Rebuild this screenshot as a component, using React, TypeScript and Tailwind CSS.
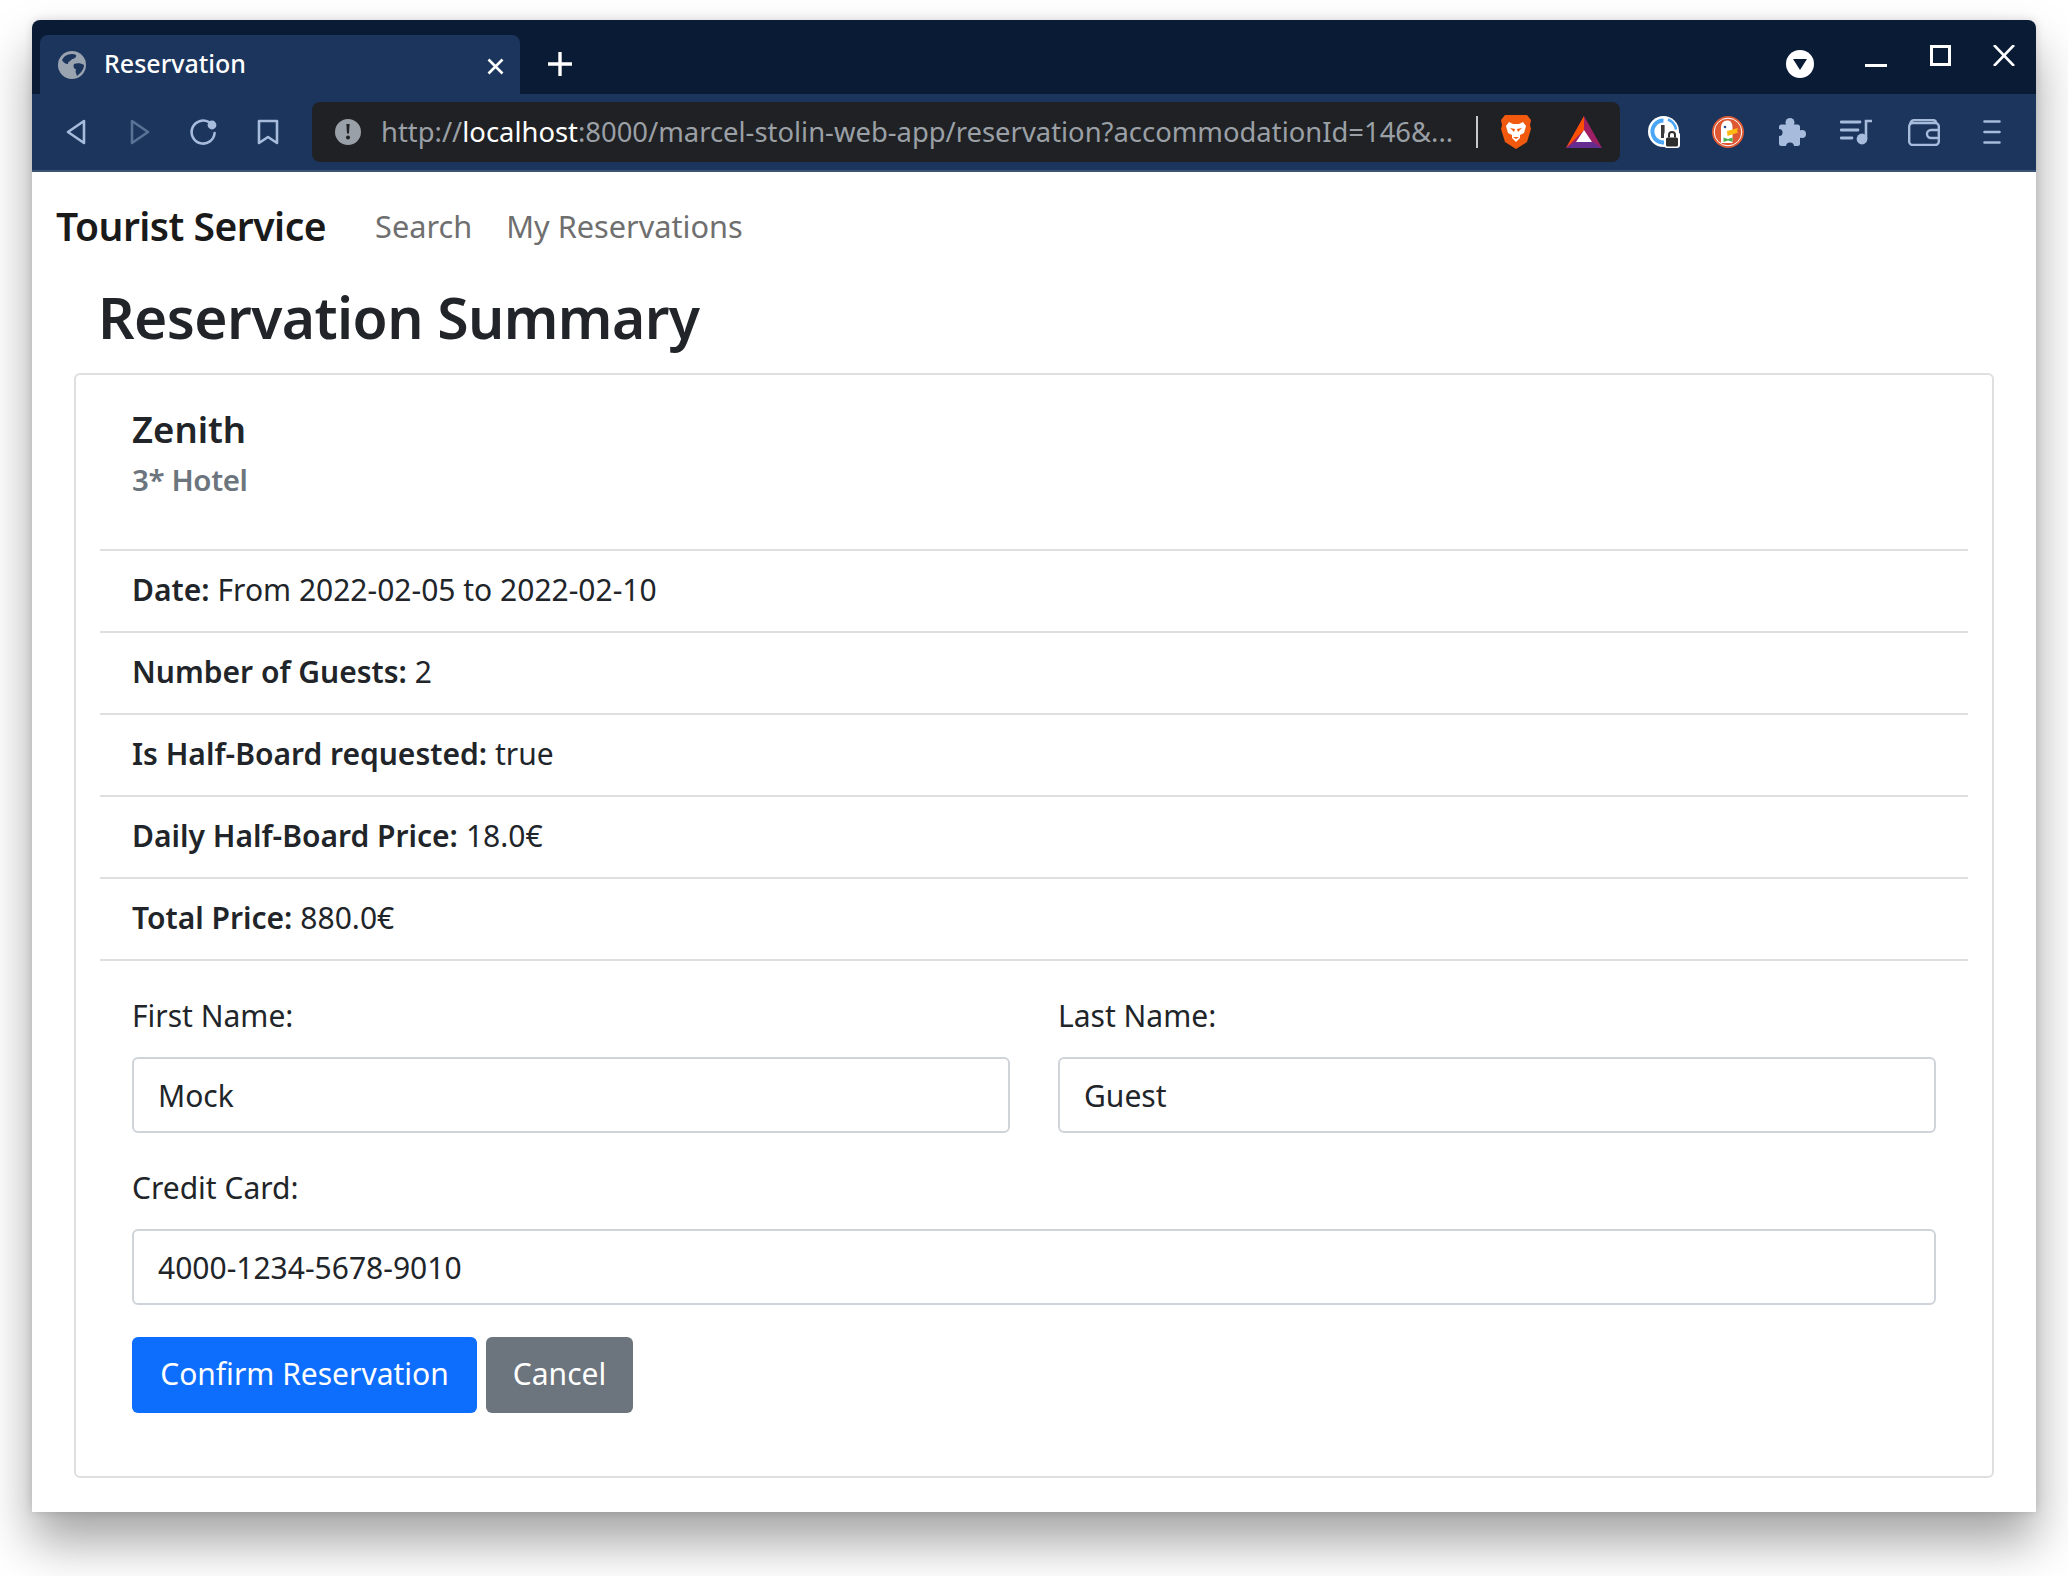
const details = [
  { label: 'Date:', value: 'From 2022-02-05 to 2022-02-10' },
  { label: 'Number of Guests:', value: '2' },
  { label: 'Is Half-Board requested:', value: 'true' },
  { label: 'Daily Half-Board Price:', value: '18.0€' },
  { label: 'Total Price:', value: '880.0€' },
]

function Field({ label, value, className }: { label: string; value: string; className?: string }) {
  return (
    <div className={className}>
      <label className="block h-[33px] leading-[33px] mb-[25px]">{label}</label>
      <input
        readOnly
        value={value}
        className="block w-full h-[76px] px-[24px] border-2 border-[#ced4da] rounded-[6px] bg-white text-[#212529] outline-none"
      />
    </div>
  )
}

function TabStrip() {
  return (
    <div className="h-[74px] shrink-0 bg-[#0a1b35] flex items-end pl-[8px] text-white">
      <div className="w-[480px] h-[60px] bg-[#1b355c] rounded-t-[8px] flex items-center pl-[18px] pr-[16px] -mb-px">
        <svg width="28" height="28" viewBox="0 0 28 28">
          <circle cx="14" cy="14" r="14" fill="#9aa3b0" />
          <path d="M6 6c3-3 9-4 12-2 1 2-2 4-4 4-1 2-4 2-4 5-3 0-5-2-6-4zM16 13c3-1 7-1 10 1 0 4-3 8-7 11-1-3-2-4-1-7-2 0-3-2-2-5z" fill="#1b355c" />
        </svg>
        <span className="ml-[18px] mb-[4px] text-[25px] font-medium leading-[32px] flex-1">Reservation</span>
        <svg width="17" height="17" viewBox="0 0 17 17" className="mt-[2px]">
          <path d="M1.5 1.5l14 14M15.5 1.5l-14 14" stroke="#fff" strokeWidth="2.6" />
        </svg>
      </div>
      <svg width="24" height="24" viewBox="0 0 24 24" className="ml-[28px] mb-[18px]">
        <path d="M12 0v24M0 12h24" stroke="#fff" strokeWidth="3.4" strokeLinecap="round" />
      </svg>
      <div className="ml-auto self-start flex items-start pt-[25px] pr-[21px]">
        <div className="w-[28px] h-[28px] mt-[5px] rounded-full bg-white flex items-center justify-center">
          <svg width="14" height="11" viewBox="0 0 14 11">
            <path d="M0 0h14l-7 11z" fill="#0a1b35" />
          </svg>
        </div>
        <div className="w-[22px] h-[3px] bg-white ml-[51px] mt-[19px]" />
        <div className="w-[21px] h-[21px] border-[3px] border-white ml-[43px]" />
        <svg width="22" height="21" viewBox="0 0 22 21" className="ml-[42px]">
          <path d="M1 0l20 21M21 0L1 21" stroke="#fff" strokeWidth="2.6" />
        </svg>
      </div>
    </div>
  )
}

function Toolbar() {
  return (
    <div className="h-[78px] shrink-0 bg-[#1b355c] border-b-2 border-[#3b5375] flex items-center">
      <svg width="20" height="26" viewBox="0 0 20 26" fill="none" stroke="#a7bbdc" strokeWidth="2.6" strokeLinejoin="round" className="ml-[34px]">
        <path d="M18 2v22L2 13z" />
      </svg>
      <svg width="20" height="26" viewBox="0 0 20 26" fill="none" stroke="#587296" strokeWidth="2.6" strokeLinejoin="round" className="ml-[44px]">
        <path d="M2 2v22l16-11z" />
      </svg>
      <svg width="27" height="26" viewBox="0 0 27 26" fill="none" className="ml-[40px]">
        <path d="M19 3.2A11.5 11.5 0 1 0 24.6 14" stroke="#a7bbdc" strokeWidth="2.6" strokeLinecap="round" />
        <circle cx="22" cy="6" r="4.4" fill="#a7bbdc" />
      </svg>
      <svg width="22" height="26" viewBox="0 0 22 26" fill="none" stroke="#a7bbdc" strokeWidth="2.6" strokeLinejoin="round" className="ml-[40px]">
        <path d="M2 2h18v22l-9-6-9 6z" />
      </svg>
      <div className="w-[1308px] h-[60px] ml-[33px] bg-[#202124] rounded-[8px] flex items-center relative">
        <div className="w-[26px] h-[26px] rounded-full bg-[#9aa0a8] ml-[23px] flex items-center justify-center">
          <svg width="6" height="18" viewBox="0 0 6 18">
            <path d="M1.4 1h3.2l-.6 9.6H2z" fill="#202124" />
            <circle cx="3" cy="14.6" r="2" fill="#202124" />
          </svg>
        </div>
        <span className="ml-[20px] w-[1085px] shrink-0 text-[27.4px] leading-[40px] text-[#9aa0a6] whitespace-nowrap">
          http://<span className="text-white">localhost</span>:8000/marcel-stolin-web-app/reservation?accommodationId=146&...
        </span>
        <div className="w-[2px] h-[32px] bg-[#c7c9cc] ml-[10px]" />
        <svg width="32" height="36" viewBox="0 0 32 36" className="ml-[22px]">
          <path d="M5 1h22l4 5-1 5 1 4-4 13-11 7-11-7L1 15l1-4-1-5z" fill="#f15a0e" />
          <path d="M9 8l4 2h6l4-2 3 4-2 7-4 2 0 3-4 4-4-4 0-3-4-2-2-7z" fill="#fff" />
          <path d="M10 14l5 1-1 3zM22 14l-5 1 1 3zM13 23h6l-3 2z" fill="#f15a0e" />
        </svg>
        <svg width="36" height="32" viewBox="0 0 36 32" className="ml-[34px]">
          <path d="M18 0l18 32H0z" fill="#9e1f63" />
          <path d="M18 0v14L0 32z" fill="#ff5000" />
          <path d="M0 32l9-6h18l9 6z" fill="#662d91" />
          <path d="M18 14l8 12H10z" fill="#fff" />
        </svg>
      </div>
      <svg width="32" height="32" viewBox="0 0 32 32" className="ml-[28px]">
        <circle cx="15.5" cy="15.5" r="15.5" fill="#fff" />
        <path d="M15.5 4.5a11 11 0 1 0 8 18.500" fill="none" stroke="#4ba6f5" strokeWidth="4" />
        <path d="M20 3.500a13 13 0 0 1 8 10" fill="none" stroke="#4ba6f5" strokeWidth="2.500" />
        <rect x="13" y="9" width="3.600" height="13" fill="#3b3b3b" />
        <rect x="16" y="16" width="16" height="16" rx="3" fill="#fff" />
        <rect x="18" y="21.500" width="12" height="9" rx="1.500" fill="#2e2e2e" />
        <path d="M21 21.500v-2.500a3 3 0 0 1 6 0v2.500" fill="none" stroke="#2e2e2e" strokeWidth="2" />
      </svg>
      <svg width="32" height="32" viewBox="0 0 32 32" className="ml-[32px]">
        <circle cx="16" cy="16" r="16" fill="#de5833" />
        <circle cx="16" cy="16" r="13.800" fill="none" stroke="#fff" strokeWidth="1" />
        <path d="M9 27V12c0-5 3-8 7-7.500 3.500.5 4.500 3.500 4.500 7.500v15z" fill="#fff" />
        <circle cx="13" cy="11" r="1.300" fill="#2d4f8e" />
        <path d="M15 15l11-3-1 3.500 1.500 1-11 3.500z" fill="#fdb813" />
        <path d="M11.500 21.500l4.500 1.500 4.500-1.500v4.500l-4.500-1.500-4.500 1.500z" fill="#4caf50" />
      </svg>
      <svg width="28" height="28" viewBox="0 0 28 28" className="ml-[34px]">
        <circle cx="12" cy="4.500" r="4.500" fill="#a7bbdc" />
        <circle cx="24" cy="16" r="4" fill="#a7bbdc" />
        <rect x="1" y="6.500" width="21" height="21.500" rx="2.500" fill="#a7bbdc" />
        <circle cx="1" cy="14.500" r="3.500" fill="#1b355c" />
        <circle cx="12" cy="28.500" r="4" fill="#1b355c" />
      </svg>
      <svg width="32" height="26" viewBox="0 0 32 26" fill="none" className="ml-[34px]">
        <path d="M1 3h19M1 11h17M1 19h11" stroke="#a7bbdc" strokeWidth="2.800" strokeLinecap="round" />
        <path d="M26 20V2h6" stroke="#a7bbdc" strokeWidth="2.600" />
        <circle cx="22" cy="20" r="5.400" fill="#a7bbdc" />
      </svg>
      <svg width="32" height="27" viewBox="0 0 32 27" fill="none" stroke="#a7bbdc" strokeWidth="2.400" className="ml-[36px]">
        <rect x="1.200" y="4" width="29.600" height="22" rx="3.500" />
        <path d="M2 6c0-3 2-5 5-5h17c2 0 4 1 4 3" />
        <path d="M31 11h-8a4 4 0 0 0 0 8h8" />
      </svg>
      <svg width="18" height="24" viewBox="0 0 18 24" fill="none" stroke="#a7bbdc" strokeWidth="2.600" strokeLinecap="round" className="ml-[43px]">
        <path d="M1.500 1.500h15M1.500 12h15M1.500 22.500h15" />
      </svg>
    </div>
  )
}

export default function App() {
  return (
    <div className="min-h-[1576px] bg-white pt-[20px] pl-[32px] font-['Noto_Sans',sans-serif] text-[#212529] text-[30px]">
      <div className="w-[2004px] h-[1492px] flex flex-col rounded-t-[8px] overflow-hidden bg-white shadow-[0_30px_50px_rgba(0,0,0,0.36),0_0_10px_rgba(0,0,0,0.14)]">
        <TabStrip />
        <Toolbar />
        <nav className="h-[108px] shrink-0 flex items-center pl-[24px] text-[30.700px]">
          <a className="text-[39px] font-semibold tracking-[-0.5px] text-[#1a1a1a]">Tourist Service</a>
          <a className="ml-[49px] text-[#6f6f6f]">Search</a>
          <a className="ml-[34px] text-[#6f6f6f]">My Reservations</a>
        </nav>
        <h1 className="h-[74px] leading-[74px] pl-[66px] text-[57px] font-semibold tracking-[-0.6px]">Reservation Summary</h1>
        <section className="mt-[19px] ml-[42px] mr-[42px] h-[1105px] border-2 border-[#dfdfdf] rounded-[6px] pl-[24px] pr-[24px]">
          <div className="h-[176px] border-b-2 border-[#dfdfdf] px-[32px] pt-[31px]">
            <h5 className="text-[36.500px] leading-[46px] font-semibold">Zenith</h5>
            <h6 className="mt-[7px] text-[29.500px] leading-[42px] font-semibold tracking-[-0.4px] text-[#6c757d]">3* Hotel</h6>
          </div>
          {details.map((item) => (
            <div key={item.label} className="h-[82px] border-b-2 border-[#dfdfdf] px-[32px] pb-[3px] flex items-center">
              <span className="font-semibold">{item.label}</span>
              <span className="ml-[8px]">{item.value}</span>
            </div>
          ))}
          <form className="px-[32px] pt-[38px]">
            <div className="grid grid-cols-2 gap-x-[48px]">
              <Field label="First Name:" value="Mock" />
              <Field label="Last Name:" value="Guest" />
            </div>
            <Field label="Credit Card:" value="4000-1234-5678-9010" className="mt-[38px]" />
            <div className="mt-[32px] flex gap-[9px]">
              <button type="button" className="w-[345px] h-[76px] pb-[3px] rounded-[6px] bg-[#0d6efd] text-white">Confirm Reservation</button>
              <button type="button" className="w-[147px] h-[76px] pb-[3px] rounded-[6px] bg-[#6c757d] text-white">Cancel</button>
            </div>
          </form>
        </section>
      </div>
    </div>
  )
}
